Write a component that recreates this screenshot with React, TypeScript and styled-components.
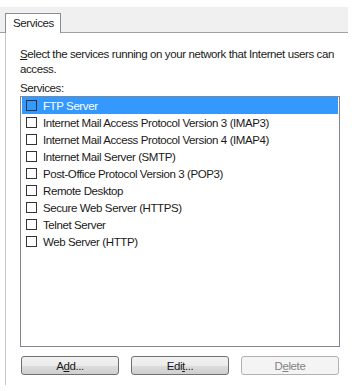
import styled, { createGlobalStyle } from 'styled-components';

const services = [
  'FTP Server',
  'Internet Mail Access Protocol Version 3 (IMAP3)',
  'Internet Mail Access Protocol Version 4 (IMAP4)',
  'Internet Mail Server (SMTP)',
  'Post-Office Protocol Version 3 (POP3)',
  'Remote Desktop',
  'Secure Web Server (HTTPS)',
  'Telnet Server',
  'Web Server (HTTP)',
];

function App() {
  return (
    <>
      <GlobalStyle />
      <DialogBox>
        <TabStrip>
          <TabBox>Services</TabBox>
        </TabStrip>
        <PanelBox>
          <DescriptionText>
            <AccessKey>S</AccessKey>elect the services running on your network that Internet users can
            access.
          </DescriptionText>
          <LabelText>Services:</LabelText>
          <ListBox>
            {services.map((name, i) => (
              <RowBox key={name} $selected={i === 0}>
                <CheckBox />
                {name}
              </RowBox>
            ))}
          </ListBox>
          <ButtonRow>
            <ActionButton>
              A<AccessKey>d</AccessKey>d...
            </ActionButton>
            <ActionButton>
              Edi<AccessKey>t</AccessKey>...
            </ActionButton>
            <ActionButton disabled>
              D<AccessKey>e</AccessKey>lete
            </ActionButton>
          </ButtonRow>
        </PanelBox>
      </DialogBox>
    </>
  );
}

const GlobalStyle = createGlobalStyle`
  body {
    margin: 0;
    background: #ffffff;
    font-family: 'Liberation Sans', Arial, sans-serif;
    font-size: 11.5px;
    letter-spacing: -0.4px;
    color: #1a1a1a;
  }
`;

const DialogBox = styled.div`
  width: 348px;
  padding-top: 7px;
`;

const TabStrip = styled.div`
  height: 26px;
  display: flex;
  align-items: flex-end;
  padding-left: 5px;
  background: #f0f0f0;
  border-bottom: 1px solid #a0a0a0;
  box-sizing: border-box;
`;

const TabBox = styled.div`
  position: relative;
  height: 20px;
  width: 56px;
  margin-bottom: -1px;
  box-sizing: border-box;
  border: 1px solid #898c95;
  border-bottom: none;
  background: #ffffff;
  padding-left: 7px;
  line-height: 19px;
`;

const PanelBox = styled.div`
  margin-left: 5px;
  height: 352px;
  border-left: 1px solid #c8c8c8;
  padding: 14px 8px 0 14px;
  box-sizing: border-box;
`;

const AccessKey = styled.span`
  text-decoration: underline;
`;

const DescriptionText = styled.p`
  margin: 0;
  line-height: 15px;
  width: 320px;
`;

const LabelText = styled.div`
  margin-top: 4px;
  line-height: 15px;
`;

const ListBox = styled.div`
  width: 320px;
  height: 251px;
  box-sizing: border-box;
  border: 1px solid #828790;
  padding: 0 1px;
`;

const RowBox = styled.div<{ $selected?: boolean }>`
  height: 17px;
  display: flex;
  align-items: center;
  gap: 6px;
  padding-left: 4px;
  background: ${({ $selected }) => ($selected ? '#3399ff' : 'transparent')};
  color: ${({ $selected }) => ($selected ? '#ffffff' : '#1a1a1a')};
  white-space: nowrap;
`;

const CheckBox = styled.span`
  width: 11px;
  height: 11px;
  box-sizing: border-box;
  border: 1px solid #333333;
  flex-shrink: 0;
`;

const ButtonRow = styled.div`
  display: flex;
  gap: 12px;
  margin-top: 9px;
  padding-left: 1px;
`;

const ActionButton = styled.button`
  width: 98px;
  height: 19px;
  padding: 0;
  font-family: inherit;
  font-size: inherit;
  letter-spacing: inherit;
  color: #1a1a1a;
  border: 1px solid #707070;
  border-radius: 3px;
  background: linear-gradient(#f2f2f2 0%, #ebebeb 50%, #dddddd 51%, #cfcfcf 100%);

  &:disabled {
    color: #838383;
    border-color: #adb2b5;
    background: #f4f4f4;
  }
`;

export default App;
